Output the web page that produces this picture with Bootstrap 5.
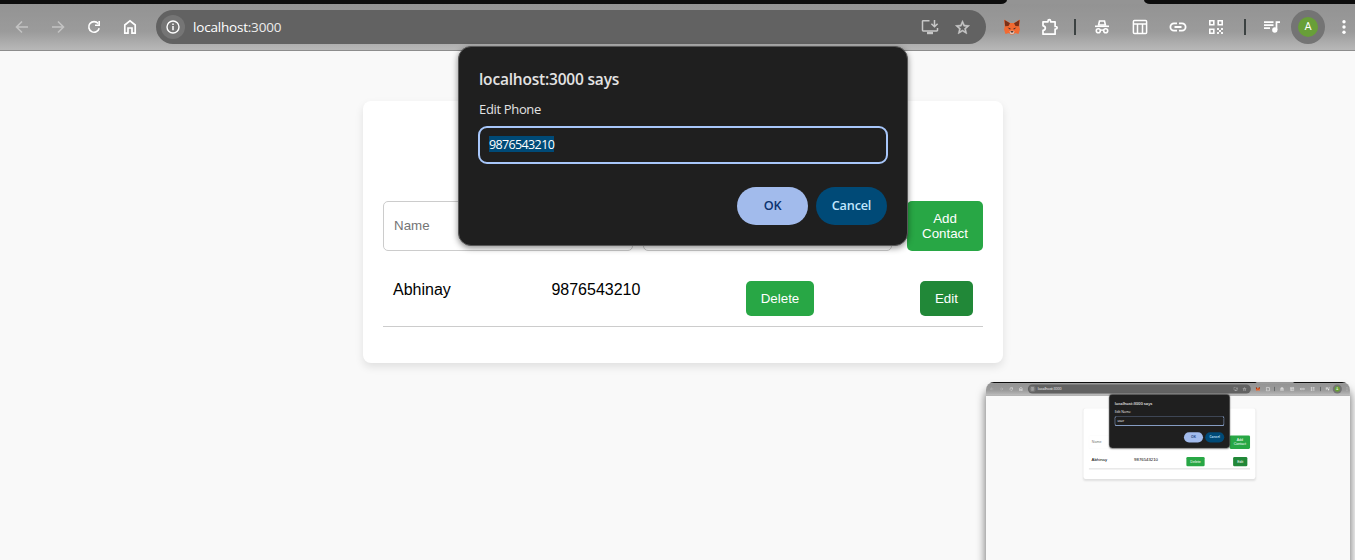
<!DOCTYPE html>
<html lang="en">
<head>
<meta charset="utf-8">
<meta name="viewport" content="width=device-width, initial-scale=1">
<title>localhost:3000</title>
<link href="https://cdn.jsdelivr.net/npm/bootstrap@5.3.0/dist/css/bootstrap.min.css" rel="stylesheet">
<style>
html,body{height:560px;overflow:hidden}
body{background:#f9f9f9;font-family:"Liberation Sans",Arial,sans-serif;color:#000}
.screen{width:1355px;height:560px;background:#f9f9f9;position:relative}
.tabstrip{height:4px;background:#949494}
.tabstrip div{background:#0d0d0d;height:4px}
.tab-l{width:1007px;border-bottom-right-radius:6px 4px}
.tab-r{width:211px;border-bottom-left-radius:6px 4px}
.toolbar{height:47px;background:linear-gradient(#939393,#9b9b9b 60%,#b8b8b8);border-bottom:1px solid #8d8d8d;padding-left:4px;color:#fff}
.cell{width:36px;flex:none;display:flex;align-items:center;justify-content:center}
.cell.wide{width:40px}
.cell.slim{width:18px}
.cell.slim i{width:2px;height:16px;background:#3c4242}
.faded{color:#c3c3c3}
.toolbar svg{display:block;flex:none}
.omnibox{width:830px;height:34px;border-radius:17px;background:#626262;margin:0 8px;padding:0 8px 0 5px;flex:none;font:13.5px/18px "Open Sans",sans-serif}
.site-info{width:24px;height:24px;border-radius:50%;background:#757575;margin-right:8px}
.omnibox .url{letter-spacing:-.2px}
.omnibox .url span{color:#ececec}
.omnibox .cell{width:32px;color:#c7c7c7}
.avatar{width:34px;height:34px;border-radius:50%;background:#747474}
.avatar b{width:20px;height:20px;border-radius:50%;background:#689f38;font:11px/20px Roboto,sans-serif;text-align:center}
.contacts{width:640px;height:262px;margin:50px 0 0 363px;background:#fff;border-radius:8px;padding:100px 20px 0;box-shadow:0 4px 8px rgba(0,0,0,.1)}
.field{width:250px;height:50px;border:1px solid #ccc;border-radius:5px;padding:0 10px;font-size:13.333px;line-height:48px;color:#757575;background:#fff}
.green{background:#28a745;color:#fff;border:0;border-radius:5px;padding:10px 15px;font-size:13.333px;line-height:15px;text-align:center}
.green.hovered{background:#218838}
.green.remove{width:68px;padding:10px 0}
.add{width:76px;margin-left:5px;padding:10px}
.entry{display:grid;grid-template-columns:158.4px 194.6px 174px 53px;padding:10px;margin-top:20px;height:56px;border-bottom:1px solid #ccc;font-size:16px;line-height:18px;align-items:start}
.prompt{position:absolute;left:458px;top:46px;width:450px;height:200px;border-radius:13px;background:#1f1f1f;border:1px solid #585858;box-shadow:0 2px 6px rgba(0,0,0,.45);padding:21px 20px 0 20px;font-family:"Open Sans",sans-serif;color:#e3e3e3}
.prompt h1{font-size:15.5px;line-height:22px;font-weight:600;margin:0 0 10px;letter-spacing:-.2px}
.prompt p{font-size:13px;line-height:18px;margin:0 0 8px;letter-spacing:-.34px}
.answer{width:410px;height:38px;margin-left:-1px;border:2px solid #a8c7fa;border-radius:9px;padding:8px 9px;font-size:12.5px;line-height:17px;color:#fff}
.answer span{background:#004a77;display:inline-block;height:16px;letter-spacing:-.63px}
.actions{margin-top:23px}
.pill{width:71px;height:38px;border-radius:19px;border:0;padding:0;font-size:12.7px;font-weight:600;letter-spacing:-.2px}
.ok{background:#a2bbec;color:#0b326f}
.no{background:#004a77;color:#c2e7ff}
.preview{position:absolute;left:986px;top:382px;width:364px;height:200px;overflow:hidden;border-radius:8px 8px 0 0;background:#f9f9f9}
.preview-shadow{position:absolute;left:986px;top:386px;width:364px;height:200px;border-radius:8px;box-shadow:0 4px 9px 1px rgba(0,0,0,.5)}
.preview .screen{transform:scale(.2686);transform-origin:0 0}
.preview .toolbar{border-bottom:3px solid #999}
.preview .contacts{margin-top:48px}
.preview .field{border-color:#f6f6f6}
.preview .entry{border-bottom:3px solid #d4d4d4}
.preview .answer{border-width:3px;border-top-color:#4a5468}
.preview .answer span{background:none}
</style>
</head>
<body>
<div class="screen" id="desk">
  <div class="tabstrip d-flex justify-content-between"><div class="tab-l"></div><div class="tab-r"></div></div>
  <div class="toolbar d-flex align-items-center">
    <div class="cell faded"><svg width="14" height="14" viewBox="0 0 14 14" fill="none" stroke="currentColor" stroke-width="1.6"><path d="M13 7H2M7 1.5 1.5 7 7 12.5"/></svg></div>
    <div class="cell faded"><svg width="14" height="14" viewBox="0 0 14 14" fill="none" stroke="currentColor" stroke-width="1.6"><path d="M1 7h11M7 1.500 12.500 7 7 12.500"/></svg></div>
    <div class="cell"><svg width="14" height="14" viewBox="0 0 14 14" fill="none" stroke="currentColor" stroke-width="1.6"><path d="M12.200 8.300A5.300 5.300 0 1 1 11.200 3.600"/><path d="M12.200 1v4.300H8" /></svg></div>
    <div class="cell"><svg width="14" height="16" viewBox="0 0 14 16" fill="none" stroke="currentColor" stroke-width="1.700"><path d="M1.800 14.200V6L7 1.900 12.200 6v8.200H9V9H5v5.200z"/></svg></div>
    <div class="omnibox d-flex align-items-center">
      <div class="site-info d-flex align-items-center justify-content-center"><svg width="14" height="14" viewBox="0 0 14 14"><circle cx="7" cy="7" r="6" fill="none" stroke="#fff" stroke-width="1.400"/><path d="M6.250 6h1.500v4.200h-1.500zM6.250 3.500h1.500V5h-1.500z" fill="#fff"/></svg></div>
      <div class="url me-auto">localhost<span>:3000</span></div>
      <div class="cell"><svg width="18" height="16" viewBox="0 0 18 16" fill="none" stroke="currentColor" stroke-width="1.500"><path d="M8.500 1.700H2.200a.7.7 0 0 0-.7.700v8.800c0 .4.300.7.700.7h13.600a.7.7 0 0 0 .7-.7V9"/><path d="M6 14h6" stroke-width="2.400"/><path d="M13.500 1v6.500M10.400 4.800l3.100 3 3.100-3"/></svg></div>
      <div class="cell"><svg width="17" height="17" viewBox="0 0 24 24" fill="currentColor"><path d="M22 9.240l-7.190-.62L12 2 9.190 8.630 2 9.240l5.460 4.730L5.820 21 12 17.270 18.180 21l-1.630-7.030L22 9.240zM12 15.400l-3.760 2.270 1-4.280-3.320-2.880 4.380-.38L12 6.100l1.710 4.040 4.380.38-3.320 2.880 1 4.280L12 15.400z" stroke="currentColor" stroke-width=".7"/></svg></div>
    </div>
    <div class="cell"><svg width="16" height="16" viewBox="0 0 16 16"><path d="M0 .5 6 4h4l6-3.500-.7 7 .7 3-1.500 4.500-3.500-1-1.500 1.500h-3L5 14l-3.500 1L0 10.500l.7-3z" fill="#f26a32"/><path d="M.5 1 6 4.300 4.500 7 1.200 7.300zM15.500 1 10 4.300l1.500 2.700 3.300.3z" fill="#7a3018"/><path d="m3.500 8.500 3 .7-.3 1.500zM12.500 8.500l-3 .7.3 1.500z" fill="#4a3030"/><path d="m5.500 12.300 1-.5h3l1 .5-1 2.700h-3z" fill="#e6c6b8"/><path d="M6.500 12h3l-.5 1.400H7z" fill="#503a36"/></svg></div>
    <div class="cell ps-1"><svg width="18" height="18" viewBox="0 0 18 18" fill="none" stroke="currentColor" stroke-width="1.700" stroke-linejoin="round"><path d="M2 3.800h5V3a1.300 1.300 0 0 1 2.600 0v.8h4.500v4.700h.8a1.200 1.200 0 0 1 0 2.500h-.8v5.200H2v-3.800c3.100-.2 3.100-4.400 0-4.600z"/></svg></div>
    <div class="cell slim"><i></i></div>
    <div class="cell"><svg width="16" height="16" viewBox="0 0 16 16" fill="none" stroke="currentColor" stroke-width="1.600"><path d="M4.600 6 5.500 2h5l.9 4z"/><path d="M1 7.300h14"/><circle cx="4.300" cy="11.800" r="2"/><circle cx="11.700" cy="11.800" r="2"/><path d="M6.300 11.400q1.700-.8 3.400 0"/></svg></div>
    <div class="cell wide"><svg width="16" height="16" viewBox="0 0 16 16" fill="none" stroke="currentColor" stroke-width="1.500"><rect x="1.400" y="1.400" width="13.200" height="13.200" rx="1"/><path d="M1.500 5h13M5.500 5v9.500M10.500 5v9.500"/></svg></div>
    <div class="cell"><svg width="18" height="10" viewBox="0 0 18 10" fill="none" stroke="currentColor" stroke-width="1.800"><path d="M8 1.400H5a3.600 3.600 0 0 0 0 7.200h3M10 1.400h3a3.600 3.600 0 0 1 0 7.200h-3M5.500 5h7"/></svg></div>
    <div class="cell wide"><svg width="16" height="16" viewBox="0 0 16 16" fill="none" stroke="currentColor" stroke-width="1.600"><path d="M1.800 1.800h4v4h-4zM10.200 1.800h4v4h-4zM1.800 10.200h4v4h-4z"/><path d="M9 9h2v2H9zm4 0h2v2h-2zm-2 2h2v2h-2zm-2 2h2v2H9zm4 0h2v2h-2z" fill="currentColor" stroke="none" opacity=".9"/></svg></div>
    <div class="cell slim"><i></i></div>
    <div class="cell"><svg width="16" height="14" viewBox="0 0 16 14" fill="none" stroke="currentColor" stroke-width="1.700"><path d="M0 2.200h9.500M0 5.200h9.500M0 8.200h6M12.500 10V2.200H16"/><circle cx="10.800" cy="10" r="1.800" fill="currentColor"/></svg></div>
    <div class="cell"><div class="avatar d-flex flex-shrink-0 align-items-center justify-content-center"><b>A</b></div></div>
    <div class="cell"><svg width="4" height="16" viewBox="0 0 4 16" fill="currentColor"><circle cx="2" cy="2.800" r="1.700"/><circle cx="2" cy="8" r="1.700"/><circle cx="2" cy="13.200" r="1.700"/></svg></div>
  </div>

  <main class="contacts">
    <div class="d-flex" style="gap:10px">
      <div class="field">Name</div>
      <div class="field" style="width:249px"></div>
      <button class="green add">Add Contact</button>
    </div>
    <div class="entry">
      <span>Abhinay</span><span>9876543210</span>
      <div><button class="green remove">Delete</button></div>
      <div><button class="green hovered">Edit</button></div>
    </div>
  </main>

  <div class="prompt">
    <h1>localhost:3000 says</h1>
    <p>Edit <span class="what">Phone</span></p>
    <div class="answer d-flex"><span class="value">9876543210</span></div>
    <div class="actions d-flex justify-content-end gap-2"><button class="pill ok">OK</button><button class="pill no">Cancel</button></div>
  </div>
</div>
<div class="preview-shadow"></div>
<div class="preview" id="preview"></div>
<script src="https://cdn.jsdelivr.net/npm/bootstrap@5.3.0/dist/js/bootstrap.bundle.min.js"></script>
<script>
// The preview shows the earlier step, where the name was being edited.
const mini = document.getElementById('desk').cloneNode(true);
mini.removeAttribute('id');
mini.querySelector('.what').textContent = 'Name';
mini.querySelector('.value').textContent = 'user';
document.getElementById('preview').append(mini);
</script>
</body>
</html>
